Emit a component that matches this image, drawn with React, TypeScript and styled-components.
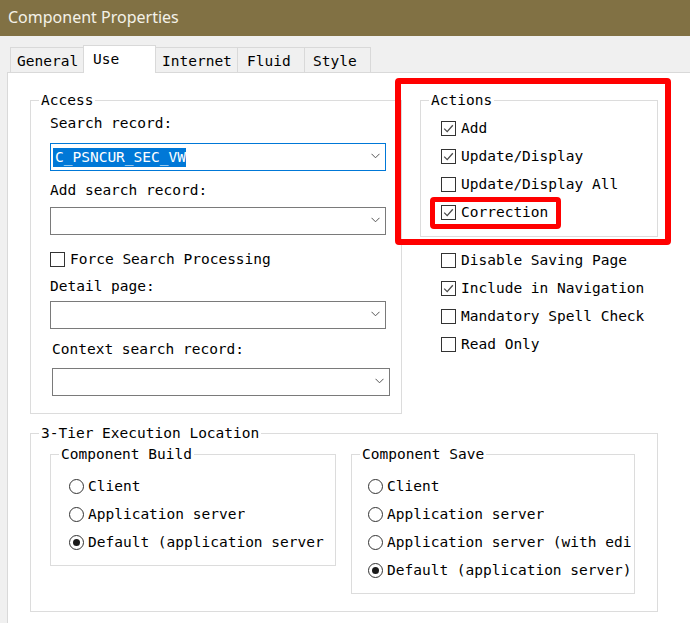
import React from 'react';
import styled, { createGlobalStyle } from 'styled-components';

const MONO = `"DejaVu Sans Mono", "Liberation Mono", monospace`;

const Global = createGlobalStyle`
  html, body { margin: 0; padding: 0; }
  body {
    background: #f0f0f0;
    font-family: ${MONO};
    font-size: 14.5px;
    color: #000;
  }
  * { box-sizing: border-box; }
`;

const Window = styled.div`
  width: 690px;
  height: 623px;
  display: flex;
  flex-direction: column;
  background: #f0f0f0;
  overflow: hidden;
`;

const TitleBar = styled.div`
  height: 36px;
  flex-shrink: 0;
  background: #817144;
  color: #f4f1e8;
  font-family: "Segoe UI", "Noto Sans", sans-serif;
  font-size: 16px;
  display: flex;
  align-items: center;
  padding: 0 0 2px 8px;
`;

const Body = styled.div`
  flex: 1;
  min-height: 0;
  display: flex;
  flex-direction: column;
  padding: 9px 0 0 7px;
`;

const TabStrip = styled.div`
  display: flex;
  align-items: flex-end;
  height: 28px;
  padding-left: 3px;
  margin-bottom: -1px;
  position: relative;
  z-index: 1;
`;

const Tab = styled.div<{ $active?: boolean; $w: number; $pl: number }>`
  width: ${(p) => p.$w}px;
  height: ${(p) => (p.$active ? 28 : 26)}px;
  padding: 4px 0 0 ${(p) => p.$pl}px;
  line-height: 18px;
  background: ${(p) => (p.$active ? '#ffffff' : '#f0f0f0')};
  border: 1px solid #d9d9d9;
  border-bottom: ${(p) => (p.$active ? 'none' : '1px solid #d9d9d9')};
  white-space: nowrap;
  position: relative;
  z-index: ${(p) => (p.$active ? 2 : 1)};
  & + & { margin-left: -1px; }
`;

const Panel = styled.div`
  flex: 1;
  background: #ffffff;
  border-top: 1px solid #d9d9d9;
  border-left: 1px solid #d9d9d9;
  position: relative;
  padding: 19px 0 0 22px;
  display: grid;
  grid-template-columns: 372px 238px;
  column-gap: 18px;
  row-gap: 11px;
  align-content: start;
  align-items: start;
`;

const Group = styled.fieldset<{ $w?: number; $span?: boolean }>`
  margin: 0;
  padding: 0;
  border: 1px solid #dcdcdc;
  min-width: 0;
  ${(p) => (p.$w ? `width: ${p.$w}px;` : '')}
  ${(p) => (p.$span ? 'grid-column: 1 / -1;' : '')}
`;

const Legend = styled.legend`
  margin-left: 8px;
  padding: 0 2px;
  line-height: 16px;
`;

const GroupBody = styled.div<{ $pad: string; $row?: boolean }>`
  padding: ${(p) => p.$pad};
  display: flex;
  flex-direction: ${(p) => (p.$row ? 'row' : 'column')};
  align-items: flex-start;
  ${(p) => (p.$row ? 'gap: 15px;' : '')}
`;

const FieldLabel = styled.div<{ $mt?: number; $ml?: number }>`
  line-height: 18px;
  margin-top: ${(p) => p.$mt ?? 0}px;
  margin-left: ${(p) => p.$ml ?? 0}px;
  white-space: nowrap;
`;

const SelectBox = styled.div<{ $focus?: boolean; $mt?: number; $ml?: number; $w: number }>`
  width: ${(p) => p.$w}px;
  height: 28px;
  margin-top: ${(p) => p.$mt ?? 0}px;
  margin-left: ${(p) => p.$ml ?? 0}px;
  border: 1px solid ${(p) => (p.$focus ? '#0078d7' : '#7a7a7a')};
  background: #fff;
  display: flex;
  align-items: center;
  padding: 0 5px 0 2px;
`;

const SelectValue = styled.div`
  flex: 1;
  display: flex;
  align-items: center;
`;

const Highlight = styled.span`
  background: #0078d7;
  color: #fff;
  line-height: 19px;
  padding: 0 0 0 2px;
  white-space: nowrap;
`;

const Chevron = styled.svg`
  width: 9px;
  height: 6px;
  flex-shrink: 0;
  margin-bottom: 2px;
`;

const CheckRow = styled.label<{ $mt?: number }>`
  display: flex;
  align-items: center;
  height: 28px;
  gap: 5px;
  margin-top: ${(p) => p.$mt ?? 0}px;
  white-space: nowrap;
`;

const Box = styled.span`
  width: 15px;
  height: 15px;
  border: 1px solid #333;
  background: #fff;
  display: inline-flex;
  align-items: center;
  justify-content: center;
  flex-shrink: 0;
`;

const CheckList = styled.div<{ $pad: string }>`
  display: flex;
  flex-direction: column;
  padding: ${(p) => p.$pad};
`;

const RightColumn = styled.div`
  display: flex;
  flex-direction: column;
`;

const RadioRow = styled.label`
  display: flex;
  align-items: center;
  height: 28px;
  gap: 4px;
  min-width: 0;
  max-width: 100%;
`;

const RadioDot = styled.span<{ $on?: boolean }>`
  width: 15px;
  height: 15px;
  border-radius: 50%;
  border: 1px solid #333;
  background: #fff;
  flex-shrink: 0;
  display: inline-flex;
  align-items: center;
  justify-content: center;
  &::after {
    content: '';
    width: 7px;
    height: 7px;
    border-radius: 50%;
    background: ${(p) => (p.$on ? '#1a1a1a' : 'transparent')};
  }
`;

const RadioText = styled.span<{ $maxCh: number }>`
  white-space: nowrap;
  overflow: hidden;
  min-width: 0;
  max-width: ${(p) => p.$maxCh}ch;
`;

const Annotation = styled.div<{ $x: number; $y: number; $w: number; $h: number; $t: number }>`
  position: absolute;
  left: ${(p) => p.$x}px;
  top: ${(p) => p.$y}px;
  width: ${(p) => p.$w}px;
  height: ${(p) => p.$h}px;
  border: ${(p) => p.$t}px solid #ff0000;
  border-radius: 4px;
  pointer-events: none;
`;

const Check = ({ checked, label, mt }: { checked?: boolean; label: string; mt?: number }) => (
  <CheckRow $mt={mt}>
    <Box>
      {checked && (
        <svg width="13" height="13" viewBox="0 0 13 13">
          <path d="M2.2 6.6 L5.2 9.6 L10.8 3.2" fill="none" stroke="#4a4a4a" strokeWidth="1.3" />
        </svg>
      )}
    </Box>
    <span>{label}</span>
  </CheckRow>
);

const Radio = ({ on, label, maxCh }: { on?: boolean; label: string; maxCh: number }) => (
  <RadioRow>
    <RadioDot $on={on} />
    <RadioText $maxCh={maxCh}>{label}</RadioText>
  </RadioRow>
);

const Select = ({
  value,
  focus,
  mt,
  ml,
  w,
}: {
  value?: string;
  focus?: boolean;
  mt?: number;
  ml?: number;
  w: number;
}) => (
  <SelectBox $focus={focus} $mt={mt} $ml={ml} $w={w}>
    <SelectValue>{value && <Highlight>{value}</Highlight>}</SelectValue>
    <Chevron viewBox="0 0 9 6">
      <path d="M0.5 0.8 L4.5 4.8 L8.5 0.8" fill="none" stroke="#555" strokeWidth="1" />
    </Chevron>
  </SelectBox>
);

export default function App() {
  return (
    <>
      <Global />
      <Window>
        <TitleBar>Component Properties</TitleBar>
        <Body>
          <TabStrip>
            <Tab $w={74} $pl={6}>General</Tab>
            <Tab $w={73} $pl={9} $active>Use</Tab>
            <Tab $w={83} $pl={6}>Internet</Tab>
            <Tab $w={68} $pl={9}>Fluid</Tab>
            <Tab $w={67} $pl={8}>Style</Tab>
          </TabStrip>
          <Panel>
            <Group $w={372}>
              <Legend>Access</Legend>
              <GroupBody $pad="6px 15px 17px 19px">
                <FieldLabel>Search record:</FieldLabel>
                <Select w={336} mt={11} value="C_PSNCUR_SEC_VW" focus />
                <FieldLabel $mt={10}>Add search record:</FieldLabel>
                <Select w={336} mt={8} />
                <Check label="Force Search Processing" mt={10} />
                <FieldLabel $mt={4}>Detail page:</FieldLabel>
                <Select w={336} mt={6} />
                <FieldLabel $mt={11} $ml={2}>Context search record:</FieldLabel>
                <Select w={338} mt={10} ml={2} />
              </GroupBody>
            </Group>

            <RightColumn>
              <Group $w={238}>
                <Legend>Actions</Legend>
                <CheckList $pad="6px 0 10px 20px">
                  <Check label="Add" checked />
                  <Check label="Update/Display" checked />
                  <Check label="Update/Display All" />
                  <Check label="Correction" checked />
                </CheckList>
              </Group>
              <CheckList $pad="9px 0 0 21px">
                <Check label="Disable Saving Page" />
                <Check label="Include in Navigation" checked />
                <Check label="Mandatory Spell Check" />
                <Check label="Read Only" />
              </CheckList>
            </RightColumn>

            <Group $span>
              <Legend>3-Tier Execution Location</Legend>
              <GroupBody $pad="5px 0 17px 19px" $row>
                <Group $w={286}>
                  <Legend>Component Build</Legend>
                  <GroupBody $pad="10px 4px 9px 18px">
                    <Radio label="Client" maxCh={27} />
                    <Radio label="Application server" maxCh={27} />
                    <Radio label="Default (application server)" maxCh={27} on />
                  </GroupBody>
                </Group>
                <Group $w={284}>
                  <Legend>Component Save</Legend>
                  <GroupBody $pad="10px 1px 9px 16px">
                    <Radio label="Client" maxCh={28} />
                    <Radio label="Application server" maxCh={28} />
                    <Radio label="Application server (with edit)" maxCh={28} />
                    <Radio label="Default (application server)" maxCh={28} on />
                  </GroupBody>
                </Group>
              </GroupBody>
            </Group>

            <Annotation $x={387} $y={5} $w={276} $h={167} $t={6} />
            <Annotation $x={422} $y={124} $w={131} $h={32} $t={5} />
          </Panel>
        </Body>
      </Window>
    </>
  );
}
